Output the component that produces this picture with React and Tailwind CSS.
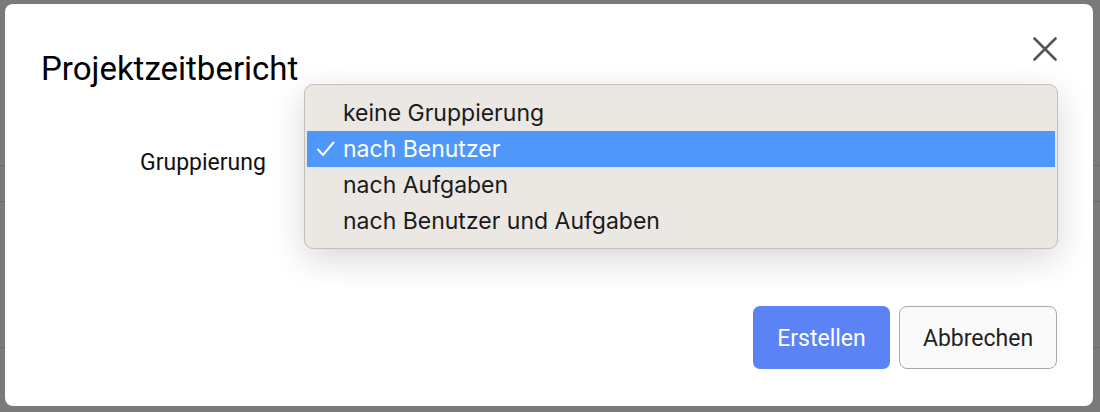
import React from 'react';

const OPTIONS = [
  { label: 'keine Gruppierung' },
  { label: 'nach Benutzer', selected: true },
  { label: 'nach Aufgaben' },
  { label: 'nach Benutzer und Aufgaben' },
];

function CloseIcon() {
  return (
    <svg width="24" height="24" viewBox="0 0 24 24" className="block">
      <path d="M1.5 1.5 L22.5 22.5 M22.5 1.5 L1.5 22.5" stroke="#555" strokeWidth="2.6" strokeLinecap="round" fill="none" />
    </svg>
  );
}

function Check() {
  return (
    <svg width="18" height="16" viewBox="0 0 18 16" className="block">
      <path d="M1 8.5 L6 14 L16.5 1.5" stroke="#fff" strokeWidth="2" strokeLinecap="round" strokeLinejoin="round" fill="none" />
    </svg>
  );
}

export default function App() {
  return (
    <div className="relative h-[412px] w-[1100px] overflow-hidden bg-[#7a7a7a] font-['Roboto',sans-serif]">
      {/* Dimmed page behind the modal */}
      <div className="flex flex-col">
        <div className="mt-[165px] h-[37px] border-y border-[#6c6c6c]" />
        <div className="mt-[145px] border-t border-[#6c6c6c]" />
      </div>

      {/* Modal */}
      <div className="absolute left-[5px] top-[4px] flex h-[402px] w-[1088px] flex-col rounded-[8px] bg-white px-[36px] pt-[33px] pb-[37px]">
        <div className="flex items-start justify-between">
          <h1 className="mt-[12px] text-[33px] leading-[40px] font-normal text-black">Projektzeitbericht</h1>
          <button className="p-0">
            <CloseIcon />
          </button>
        </div>

        <div className="mt-[47px] flex h-[54px] items-center">
          <label className="w-[264px] pl-[99px] text-[23px] text-[#111]">Gruppierung</label>
          <div className="relative h-[54px] flex-1 rounded-[8px] border border-[#b5b5b5] bg-white">
            {/* Open native-style menu */}
            <div className="absolute left-[-2px] top-[-53px] w-[754px] rounded-[9px] border border-[#c3bfbb] bg-[#ebe7e3] pt-[10px] pb-[9px] px-[2px] shadow-[0_10px_34px_rgba(0,0,0,0.16)] font-['Inter',sans-serif]">
              {OPTIONS.map((o) => (
                <div
                  key={o.label}
                  className={`flex h-[36px] items-center text-[23px] ${o.selected ? 'bg-[#4f97f8] text-white' : 'text-[#1a1a1a]'}`}
                >
                  <span className="flex w-[36px] justify-end pr-[8px]">{o.selected && <Check />}</span>
                  <span>{o.label}</span>
                </div>
              ))}
            </div>
          </div>
        </div>

        <div className="mt-auto flex justify-end gap-[9px]">
          <button className="h-[63px] w-[137px] rounded-[7px] bg-[#5b83f6] pt-[3px] text-[23px] text-white">Erstellen</button>
          <button className="h-[63px] w-[158px] rounded-[8px] border border-[#a9a9a9] bg-[#fafafa] pt-[3px] text-[23px] text-[#222]">Abbrechen</button>
        </div>
      </div>
    </div>
  );
}
